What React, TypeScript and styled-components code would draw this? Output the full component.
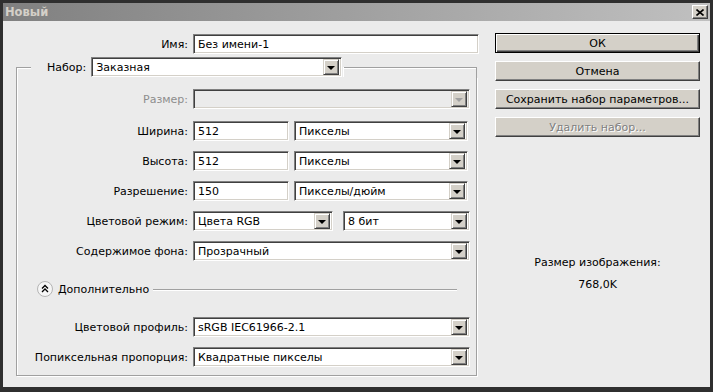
import styled, { createGlobalStyle } from 'styled-components';

const GlobalStyle = createGlobalStyle`
  html, body {
    margin: 0;
    padding: 0;
    background: #ebebeb;
  }
  body {
    font-family: 'DejaVu Sans', 'Liberation Sans', sans-serif;
    font-size: 11px;
    color: #000;
  }
`;

const Window = styled.div`
  width: 713px;
  height: 392px;
  box-sizing: border-box;
  border: 3px solid #2f2f2f;
  border-bottom-width: 5px;
  background: #ebebeb;
  display: flex;
  flex-direction: column;
  overflow: hidden;
`;

const TitleBar = styled.div`
  height: 18px;
  flex: none;
  display: flex;
  align-items: center;
  justify-content: space-between;
  padding: 0 2px 0 2px;
  background: linear-gradient(90deg, #808080 0%, #c0c0c0 100%);
`;

const Title = styled.span`
  font-weight: bold;
  color: #d4d0c8;
  font-size: 11.5px;
`;

const CloseButton = styled.div`
  width: 16px;
  height: 14px;
  box-sizing: border-box;
  background: #d4d0c8;
  border: 1px solid;
  border-color: #fff #404040 #404040 #fff;
  box-shadow: inset -1px -1px #808080;
  display: flex;
  align-items: center;
  justify-content: center;
`;

const Body = styled.div`
  flex: 1;
  display: flex;
`;

const LeftPanel = styled.div`
  width: 477px;
  box-sizing: border-box;
  padding: 13px 0 0 13px;
  display: flex;
  flex-direction: column;
  gap: 3px;
`;

const RightPanel = styled.div`
  width: 205px;
  margin-left: 15px;
  padding-top: 12px;
  display: flex;
  flex-direction: column;
  gap: 8px;
`;

const Row = styled.div<{ $indent?: number; $top?: number }>`
  display: flex;
  align-items: center;
  gap: 5px;
  height: 20px;
  padding-left: ${(p) => p.$indent ?? 0}px;
  margin-top: ${(p) => p.$top ?? 0}px;
`;

const Label = styled.label<{ $disabled?: boolean }>`
  width: 171px;
  flex: none;
  text-align: right;
  white-space: nowrap;
  color: ${(p) => (p.$disabled ? '#8d8d8d' : '#000')};
`;

const Sunken = styled.div<{ $w: number; $disabled?: boolean }>`
  width: ${(p) => p.$w}px;
  height: 20px;
  flex: none;
  box-sizing: border-box;
  background: ${(p) => (p.$disabled ? '#ebebeb' : '#fff')};
  border: 1px solid;
  border-color: #808080 #fff #fff #808080;
  box-shadow: inset 1px 1px #404040, inset -1px -1px #d4d0c8;
  display: flex;
  align-items: center;
  padding: 2px 2px 2px 4px;
  white-space: nowrap;
`;

const Value = styled.span`
  flex: 1;
  overflow: hidden;
`;

const ArrowButton = styled.div`
  width: 16px;
  height: 16px;
  box-sizing: border-box;
  flex: none;
  background: #d4d0c8;
  border: 1px solid;
  border-color: #d4d0c8 #404040 #404040 #d4d0c8;
  box-shadow: inset 1px 1px #fff, inset -1px -1px #808080;
  display: flex;
  align-items: center;
  justify-content: center;
`;

const Triangle = styled.span<{ $disabled?: boolean }>`
  width: 0;
  height: 0;
  border-left: 4px solid transparent;
  border-right: 4px solid transparent;
  border-top: 4px solid ${(p) => (p.$disabled ? '#a0a0a0' : '#000')};
  margin-top: 1px;
`;

const Group = styled.div`
  width: 461px;
  display: flex;
  flex-direction: column;
`;

const GroupHeader = styled.div`
  display: flex;
  align-items: center;
  height: 20px;
`;

const EdgeLeft = styled.div`
  align-self: flex-end;
  width: 15px;
  height: 10px;
  box-sizing: border-box;
  border-top: 1px solid #a0a0a0;
  border-left: 1px solid #a0a0a0;
  box-shadow: inset 1px 1px #fff;
`;

const EdgeRight = styled.div`
  align-self: flex-end;
  flex: 1;
  margin-left: 2px;
  height: 10px;
  box-sizing: border-box;
  border-top: 1px solid #a0a0a0;
  border-right: 1px solid #a0a0a0;
  box-shadow: 0 1px 0 #fff inset, -1px 0 0 #fff;
`;

const GroupTitle = styled.span`
  margin-left: 16px;
  margin-right: 5px;
`;

const GroupBody = styled.div`
  border: 1px solid #a0a0a0;
  border-top: none;
  box-shadow: inset 1px 0 #fff, 1px 1px 0 #fff;
  padding: 12px 6px 8px 0;
  display: flex;
  flex-direction: column;
  gap: 10px;
`;

const AdvancedRow = styled.div`
  display: flex;
  align-items: center;
  height: 16px;
  margin: 10px 13px 10px 20px;
`;

const AdvancedText = styled.span`
  margin: 0 4px 0 5px;
`;

const Rule = styled.div`
  flex: 1;
  height: 1px;
  background: #a0a0a0;
  box-shadow: 0 1px 0 #fff;
`;

const Button = styled.div<{ $default?: boolean; $disabled?: boolean }>`
  height: 20px;
  box-sizing: border-box;
  background: #d4d0c8;
  border: 1px solid;
  border-color: ${(p) => (p.$default ? '#000' : '#fff #404040 #404040 #fff')};
  box-shadow: ${(p) =>
    p.$default
      ? 'inset 1px 1px #fff, inset -1px -1px #404040, inset -2px -2px #808080'
      : 'inset -1px -1px #808080'};
  display: flex;
  align-items: center;
  justify-content: center;
  color: ${(p) => (p.$disabled ? '#808080' : '#000')};
  text-shadow: ${(p) => (p.$disabled ? '1px 1px 0 #fff' : 'none')};
`;

const SizeInfo = styled.div`
  margin-top: 107px;
  display: flex;
  flex-direction: column;
  align-items: center;
  line-height: 22px;
`;

type ComboProps = { w: number; value?: string; disabled?: boolean };

const Combo = ({ w, value = '', disabled }: ComboProps) => (
  <Sunken $w={w} $disabled={disabled}>
    <Value>{value}</Value>
    <ArrowButton>
      <Triangle $disabled={disabled} />
    </ArrowButton>
  </Sunken>
);

const Input = ({ w, value }: { w: number; value: string }) => (
  <Sunken $w={w}>
    <Value>{value}</Value>
  </Sunken>
);

const App = () => {
  return (
    <>
      <GlobalStyle />
      <Window>
        <TitleBar>
          <Title>Новый</Title>
          <CloseButton>
            <svg width="8" height="7" viewBox="0 0 8 7">
              <path d="M0.5 0.5 L7.5 6.5 M7.5 0.5 L0.5 6.5" stroke="#000" strokeWidth="1.6" />
            </svg>
          </CloseButton>
        </TitleBar>
        <Body>
          <LeftPanel>
            <Row $indent={1}>
              <Label>Имя:</Label>
              <Input w={286} value="Без имени-1" />
            </Row>
            <Group>
              <GroupHeader>
                <EdgeLeft />
                <GroupTitle>Набор:</GroupTitle>
                <Combo w={251} value="Заказная" />
                <EdgeRight />
              </GroupHeader>
              <GroupBody>
                <Row>
                  <Label $disabled>Размер:</Label>
                  <Combo w={277} disabled />
                </Row>
                <Row $top={2}>
                  <Label>Ширина:</Label>
                  <Input w={96} value="512" />
                  <Row>
                    <Combo w={174} value="Пикселы" />
                  </Row>
                </Row>
                <Row>
                  <Label>Высота:</Label>
                  <Input w={96} value="512" />
                  <Row>
                    <Combo w={174} value="Пикселы" />
                  </Row>
                </Row>
                <Row>
                  <Label>Разрешение:</Label>
                  <Input w={96} value="150" />
                  <Row>
                    <Combo w={174} value="Пикселы/дюйм" />
                  </Row>
                </Row>
                <Row>
                  <Label>Цветовой режим:</Label>
                  <Combo w={140} value="Цвета RGB" />
                  <Row $indent={5}>
                    <Combo w={127} value="8 бит" />
                  </Row>
                </Row>
                <Row>
                  <Label>Содержимое фона:</Label>
                  <Combo w={277} value="Прозрачный" />
                </Row>
                <AdvancedRow>
                  <svg width="16" height="16" viewBox="0 0 16 16">
                    <circle cx="8" cy="8" r="7.5" fill="#f6f6f6" stroke="#b4b4b4" />
                    <path d="M5 7.5 L8 4.5 L11 7.5 M5 11 L8 8 L11 11" fill="none" stroke="#000" strokeWidth="1.3" />
                  </svg>
                  <AdvancedText>Дополнительно</AdvancedText>
                  <Rule />
                </AdvancedRow>
                <Row>
                  <Label>Цветовой профиль:</Label>
                  <Combo w={277} value="sRGB IEC61966-2.1" />
                </Row>
                <Row>
                  <Label>Попиксельная пропорция:</Label>
                  <Combo w={277} value="Квадратные пикселы" />
                </Row>
              </GroupBody>
            </Group>
          </LeftPanel>
          <RightPanel>
            <Button $default>ОК</Button>
            <Button>Отмена</Button>
            <Button>Сохранить набор параметров...</Button>
            <Button $disabled>Удалить набор...</Button>
            <SizeInfo>
              <span>Размер изображения:</span>
              <span>768,0K</span>
            </SizeInfo>
          </RightPanel>
        </Body>
      </Window>
    </>
  );
};

export default App;
